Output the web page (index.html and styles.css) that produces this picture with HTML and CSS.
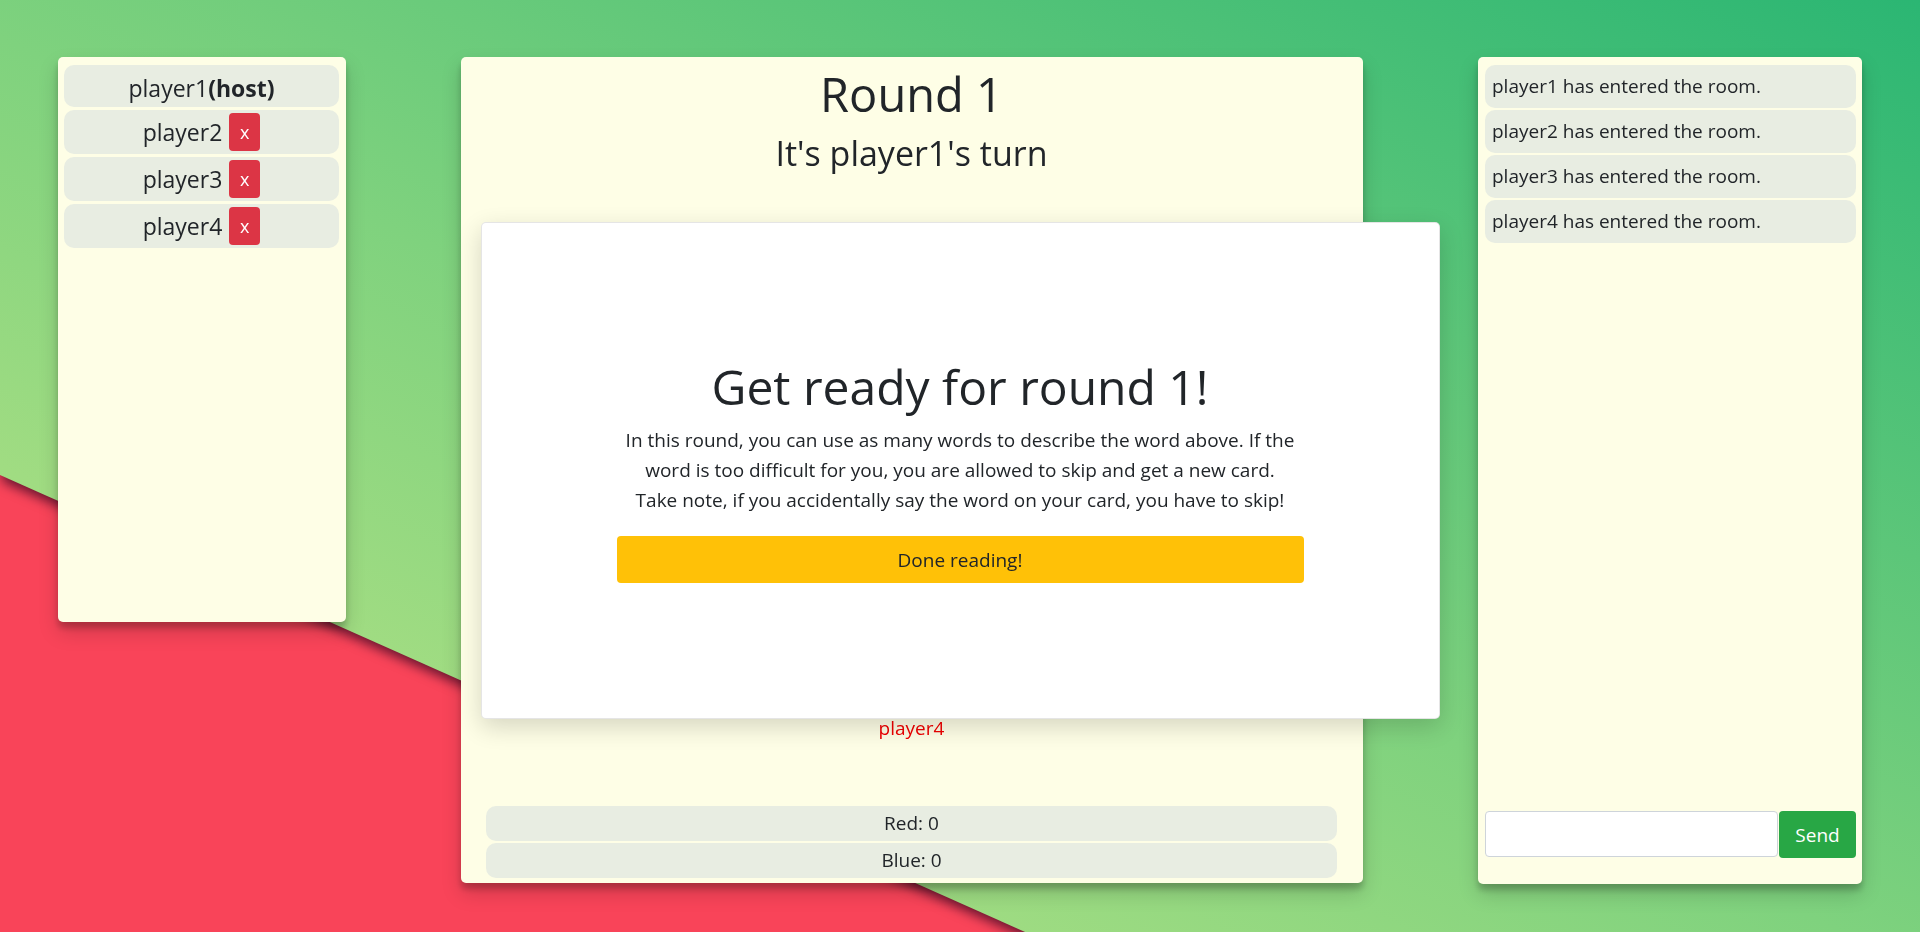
FILE: index.html
```html
<!DOCTYPE html>
<html lang="en">
<head>
<meta charset="utf-8">
<title>Round 1</title>
<link rel="stylesheet" href="styles.css">
</head>
<body>
<div class="backdrop">
  <div class="backdrop-shade">
    <div class="backdrop-green"></div>
  </div>
</div>

<main class="layout">
  <aside class="panel players">
    <div class="player-row">player1<b>(host)</b></div>
    <div class="player-row"><span>player2</span><button class="kick">x</button></div>
    <div class="player-row"><span>player3</span><button class="kick">x</button></div>
    <div class="player-row"><span>player4</span><button class="kick">x</button></div>
  </aside>

  <section class="panel game">
    <h1 class="round-title">Round 1</h1>
    <h2 class="turn-title">It's player1's turn</h2>
    <div class="team-member">player4</div>
    <div class="scores">
      <div class="score-row">Red: 0</div>
      <div class="score-row">Blue: 0</div>
    </div>
  </section>

  <aside class="panel chat">
    <div class="messages">
      <div class="message">player1 has entered the room.</div>
      <div class="message">player2 has entered the room.</div>
      <div class="message">player3 has entered the room.</div>
      <div class="message">player4 has entered the room.</div>
    </div>
    <form class="chat-form">
      <input class="chat-input" type="text">
      <button class="send" type="button">Send</button>
    </form>
  </aside>
</main>

<div class="modal-overlay">
  <div class="modal">
    <div class="modal-content">
      <h3 class="modal-title">Get ready for round 1!</h3>
      <p class="modal-text">In this round, you can use as many words to describe the word above. If the<br>word is too difficult for you, you are allowed to skip and get a new card.<br>Take note, if you accidentally say the word on your card, you have to skip!</p>
      <button class="done" type="button">Done reading!</button>
    </div>
  </div>
</div>
</body>
</html>
```

FILE: styles.css
```css
* {
  box-sizing: border-box;
}

html, body {
  margin: 0;
  height: 100%;
}

body {
  font-family: "Open Sans", "Noto Sans", sans-serif;
  font-size: 19px;
  line-height: 1.5;
  color: #212529;
  overflow: hidden;
}

/* background */
.backdrop {
  position: fixed;
  inset: 0;
  z-index: -1;
  background: #f94459;
}

.backdrop-shade {
  position: absolute;
  inset: 0;
  filter: drop-shadow(2px 6px 6px rgba(40, 0, 30, 0.7));
}

.backdrop-green {
  position: absolute;
  inset: 0;
  background: linear-gradient(to bottom left, #2bb673 0%, #5cc679 30%, #7fd27e 52%, #a0dc82 75%, #b0e387 100%);
  clip-path: polygon(0 0, 100% 0, 100% 100%, 53.39% 100%, 0 50.97%);
}

/* layout */
.layout {
  display: flex;
  align-items: flex-start;
  gap: 115px;
  padding: 57px 58px 0;
}

.panel {
  background: #fefee6;
  border-radius: 5px;
  box-shadow: 0 10px 20px rgba(0, 0, 0, 0.17), 0 6px 6px rgba(0, 0, 0, 0.2);
}

/* players */
.players {
  width: 288px;
  height: 565px;
  flex: none;
  padding: 8px 7px 8px 6px;
  display: flex;
  flex-direction: column;
  gap: 3px;
}

.player-row {
  background: #e8ede2;
  border-radius: 10px;
  min-height: 42px;
  padding: 3px 8px;
  display: flex;
  align-items: center;
  justify-content: center;
  gap: 7px;
  font-size: 23px;
  line-height: 32px;
}

.player-row:first-child {
  gap: 0;
  padding-top: 6px;
}

.player-row b {
  font-weight: 700;
}

.kick {
  width: 31px;
  height: 38px;
  padding: 0;
  border: none;
  border-radius: 4px;
  background: #dc3545;
  color: #fff;
  font-family: inherit;
  font-size: 18px;
  font-weight: 500;
  line-height: 38px;
}

/* game */
.game {
  width: 902px;
  height: 826px;
  flex: none;
  padding: 9px 26px 5px 25px;
  display: flex;
  flex-direction: column;
  align-items: stretch;
  text-align: center;
}

.round-title {
  margin: 0;
  font-size: 47px;
  font-weight: 400;
  line-height: 1.2;
}

.turn-title {
  margin: 11px 0 0;
  font-size: 34px;
  font-weight: 400;
  line-height: 1.2;
}

.team-member {
  margin-top: 540px;
  color: #f00000;
  line-height: 28.5px;
}

.scores {
  margin-top: auto;
  display: flex;
  flex-direction: column;
  gap: 2px;
}

.score-row {
  height: 35px;
  line-height: 35px;
  background: #e8ede2;
  border-radius: 10px;
}

/* chat */
.chat {
  width: 384px;
  height: 827px;
  flex: none;
  padding: 8px 6px 26px 7px;
  display: flex;
  flex-direction: column;
}

.messages {
  flex: 1;
  display: flex;
  flex-direction: column;
  gap: 2px;
}

.message {
  background: #e8ede2;
  border-radius: 10px;
  padding: 7px 7px;
  line-height: 29px;
}

.chat-form {
  display: flex;
  align-items: flex-start;
  gap: 1px;
  margin: 0;
}

.chat-input {
  width: 293px;
  height: 46px;
  border: 1px solid #ced4da;
  border-radius: 4px;
  background: #fff;
  font-family: inherit;
  font-size: 19px;
  padding: 6px 12px;
}

.send {
  width: 77px;
  height: 47px;
  border: none;
  border-radius: 4px;
  background: #28a745;
  color: #fff;
  font-family: inherit;
  font-size: 19px;
  padding: 0;
}

/* modal */
.modal-overlay {
  position: fixed;
  inset: 0;
  padding-top: 9px;
  display: flex;
  align-items: center;
  justify-content: center;
}

.modal {
  width: 959px;
  height: 497px;
  background: #fff;
  border: 1px solid rgba(0, 0, 0, 0.1);
  border-radius: 5px;
  box-shadow: 0 8px 24px rgba(0, 0, 0, 0.16);
  display: flex;
  align-items: center;
  justify-content: center;
}

.modal-content {
  width: 687px;
  text-align: center;
}

.modal-title {
  margin: 0 0 10px;
  font-size: 48px;
  font-weight: 400;
  line-height: 1.2;
}

.modal-text {
  margin: 0 0 21px;
  font-size: 19px;
  line-height: 30px;
  white-space: nowrap;
}

.done {
  display: block;
  width: 100%;
  height: 47px;
  border: none;
  border-radius: 4px;
  background: #ffc107;
  color: #212529;
  font-family: inherit;
  font-size: 19px;
  padding: 0;
}
```
